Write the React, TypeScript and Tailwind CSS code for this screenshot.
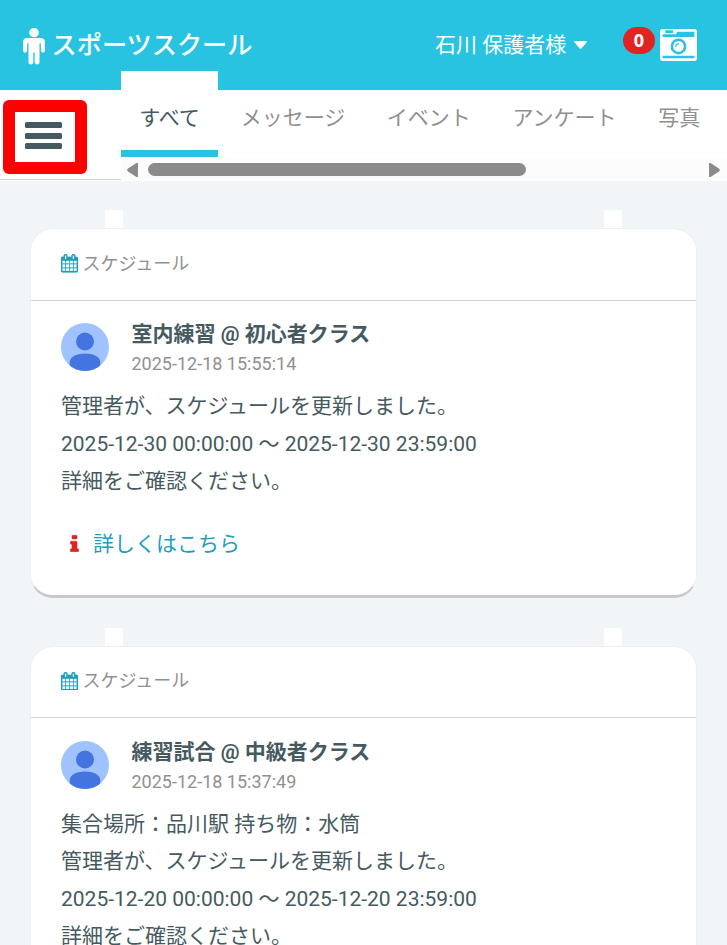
import React from "react";

interface Post {
  id: number;
  title: string;
  postedAt: string;
  lines: string[];
}

const tabs = ["すべて", "メッセージ", "イベント", "アンケート", "写真"];

const posts: Post[] = [
  {
    id: 1,
    title: "室内練習 @ 初心者クラス",
    postedAt: "2025-12-18 15:55:14",
    lines: [
      "管理者が、スケジュールを更新しました。",
      "2025-12-30 00:00:00 〜 2025-12-30 23:59:00",
      "詳細をご確認ください。",
    ],
  },
  {
    id: 2,
    title: "練習試合 @ 中級者クラス",
    postedAt: "2025-12-18 15:37:49",
    lines: [
      "集合場所：品川駅 持ち物：水筒",
      "管理者が、スケジュールを更新しました。",
      "2025-12-20 00:00:00 〜 2025-12-20 23:59:00",
      "詳細をご確認ください。",
    ],
  },
];

function MaleIcon({ className }: { className: string }) {
  return (
    <svg viewBox="0 160 1024 1760" preserveAspectRatio="none" className={className} fill="currentColor">
      <path d="M1024 832v416q0 40-28 68t-68 28-68-28-28-68v-352h-64v912q0 46-33 79t-79 33-79-33-33-79v-464h-64v464q0 46-33 79t-79 33-79-33-33-79v-912h-64v352q0 40-28 68t-68 28-68-28-28-68v-416q0-80 56-136t136-56h640q80 0 136 56t56 136zm-288-448q0 93-65.500 158.500t-158.500 65.500-158.500-65.500-65.500-158.500 65.500-158.500 158.500-65.500 158.500 65.500 65.500 158.500z" />
    </svg>
  );
}

function CameraIcon({ className }: { className: string }) {
  return (
    <svg viewBox="0 128 1792 1536" preserveAspectRatio="none" className={className} fill="currentColor">
      <path d="M928 832q0-14-9-23t-23-9q-66 0-113 47t-47 113q0 14 9 23t23 9 23-9 9-23q0-40 28-68t68-28q14 0 23-9t9-23zm224 130q0 106-75 181t-181 75-181-75-75-181 75-181 181-75 181 75 75 181zm-1024 574h1536v-128h-1536v128zm1152-574q0-159-112.500-271.500t-271.500-112.500-271.500 112.500-112.500 271.500 112.500 271.500 271.500 112.500 271.500-112.500 112.500-271.500zm-1024-642h384v-128h-384v128zm-128 192h1536v-256h-828l-64 128h-644v128zm1664-256v1280q0 53-37.500 90.500t-90.500 37.500h-1536q-53 0-90.500-37.500t-37.500-90.500v-1280q0-53 37.500-90.500t90.500-37.500h1536q53 0 90.500 37.500t37.500 90.500z" />
    </svg>
  );
}

function CalendarIcon({ className }: { className: string }) {
  return (
    <svg viewBox="64 0 1664 1792" className={className} fill="currentColor" stroke="currentColor" strokeWidth="20">
      <path d="M192 1664h288v-288h-288v288zm352 0h320v-288h-320v288zm-352-352h288v-320h-288v320zm352 0h320v-320h-320v320zm-352-384h288v-288h-288v288zm736 736h320v-288h-320v288zm-384-736h320v-288h-320v288zm768 736h288v-288h-288v288zm-384-352h320v-320h-320v320zm-352-864v-288q0-13-9.500-22.500t-22.500-9.500h-64q-13 0-22.500 9.500t-9.500 22.500v288q0 13 9.500 22.500t22.500 9.500h64q13 0 22.500-9.500t9.500-22.500zm736 864h288v-320h-288v320zm-384-384h320v-288h-320v288zm384 0h288v-288h-288v288zm32-480v-288q0-13-9.500-22.500t-22.500-9.500h-64q-13 0-22.500 9.500t-9.500 22.500v288q0 13 9.500 22.500t22.500 9.500h64q13 0 22.500-9.500t9.500-22.500zm384-64v1280q0 52-38 90t-90 38h-1408q-52 0-90-38t-38-90v-1280q0-52 38-90t90-38h128v-96q0-66 47-113t113-47h64q66 0 113 47t47 113v96h384v-96q0-66 47-113t113-47h64q66 0 113 47t47 113v96h128q52 0 90 38t38 90z" />
    </svg>
  );
}

function InfoIcon({ className }: { className: string }) {
  return (
    <svg
      viewBox="556 108 680 1448"
      preserveAspectRatio="none"
      className={className}
      fill="currentColor"
      stroke="currentColor"
      strokeWidth="40"
    >
      <path d="M1216 1344v128q0 26-19 45t-45 19h-512q-26 0-45-19t-19-45v-128q0-26 19-45t45-19h64v-384h-64q-26 0-45-19t-19-45v-128q0-26 19-45t45-19h384q26 0 45 19t19 45v576h64q26 0 45 19t19 45zm-128-1152v192q0 26-19 45t-45 19h-256q-26 0-45-19t-19-45v-192q0-26 19-45t45-19h256q26 0 45 19t19 45z" />
    </svg>
  );
}

function Avatar() {
  return (
    <svg viewBox="0 0 48 48" className="h-12 w-12 shrink-0 rounded-full bg-[#a0c3ff]" fill="#4374e0">
      <circle cx="24" cy="18.500" r="9" />
      <path d="M8.700 48V39.500C8.700 33.500 16 30.500 24 30.500S39.300 33.500 39.300 39.500V48Z" />
    </svg>
  );
}

function Header() {
  return (
    <header className="flex h-[90px] items-start bg-[#29c3e2] text-white">
      <MaleIcon className="mt-7 ml-[23px] h-[36.500px] w-[22px]" />
      <h1 className="mt-7 ml-[6.500px] w-[383.500px] text-[25.200px] leading-[36px] font-medium">スポーツスクール</h1>
      <button className="mt-[30px] flex items-center text-[21px] leading-[30px] whitespace-nowrap">
        石川 保護者様
        <svg viewBox="0 0 13 8" className="ml-2 h-2 w-[13px]" fill="currentColor">
          <path d="M1 0H12Q13.500 .4 12.500 1.600L7.500 7.200Q6.500 8.200 5.500 7.200L.5 1.600Q-.5 .4 1 0Z" />
        </svg>
      </button>
      <span className="mt-[27px] ml-auto flex h-[27px] w-8 items-center justify-center rounded-full bg-[#e02424] font-['Open_Sans',sans-serif] text-[18px] font-bold">
        0
      </span>
      <CameraIcon className="mt-[29px] mr-[30px] ml-[5px] h-8 w-[37px]" />
    </header>
  );
}

function TabBar() {
  return (
    <nav className="flex h-[91px] bg-white">
      <div className="h-[90px] w-[121px] shrink-0 border-b border-[#d5d5d8] pt-[10px] pl-[3px]">
        <button className="flex h-[74px] w-[84px] rounded-[6px] bg-[#f00] p-3">
          <span className="flex h-full w-full flex-col gap-[4.500px] bg-white pt-[10px] pl-[10px]">
            <span className="h-[6px] w-[37px] rounded-[1.500px] bg-[#455a60]" />
            <span className="h-[6px] w-[37px] rounded-[1.500px] bg-[#455a60]" />
            <span className="h-[6px] w-[37px] rounded-[1.500px] bg-[#455a60]" />
          </span>
        </button>
      </div>
      <div className="min-w-0 flex-1">
        <div className="-mt-[19px] flex h-[87px] gap-[1px] text-[21px] leading-[30px] whitespace-nowrap text-[#909090]">
          {tabs.map((tab, i) => (
            <button
              key={tab}
              className={
                i === 0
                  ? "flex h-[86px] w-[97px] shrink-0 justify-center border-b-[7px] border-[#29c3e2] bg-white pt-8 text-[#455a60]"
                  : "flex shrink-0 pt-8 pr-[18.900px] pl-[21.700px]"
              }
            >
              {tab}
            </button>
          ))}
        </div>
        <div className="flex h-[23px] items-center bg-[#fcfcfc]">
          <svg viewBox="0 0 11 14" className="ml-[6px] h-[14px] w-[11px]" fill="#8b8b8b">
            <path d="M11 0V14H9.500L1 8.500Q-.6 7 1 5.500L9.500 0Z" />
          </svg>
          <div className="ml-[10px] h-[13px] w-[378px] rounded-full bg-[#8b8b8b]" />
          <svg viewBox="0 0 11 14" className="mr-[7px] ml-auto h-[14px] w-[11px]" fill="#8b8b8b">
            <path d="M0 0V14H1.500L10 8.500Q11.600 7 10 5.500L1.500 0Z" />
          </svg>
        </div>
      </div>
    </nav>
  );
}

function PostCard({ post }: { post: Post }) {
  return (
    <div>
      <div className="flex justify-between px-[75px]">
        <div className="h-[18px] w-[18px] rounded-t-[2px] bg-white" />
        <div className="h-[18px] w-[18px] rounded-t-[2px] bg-white" />
      </div>
      <article className="rounded-[23px] border border-b-[3px] border-[#eeeef3] border-b-[#c8c8cc] bg-white">
        <div className="flex h-[71.250px] items-start border-b border-[#d5d5d8] pl-[30px] text-[18px] leading-[26px] text-[#909090]">
          <CalendarIcon className="mt-[25px] mr-[4.500px] h-[18.500px] w-[17px] text-[#209fbd]" />
          <span className="mt-[21.500px]">スケジュール</span>
        </div>
        <div className="px-[30px] pt-[17.500px] text-[#455a60]">
          <div className="flex h-[70.250px] gap-[22.500px]">
            <div className="pt-[5px]">
              <Avatar />
            </div>
            <div>
              <h2 className="text-[21px] leading-[32px] font-bold">{post.title}</h2>
              <p className="text-[18px] leading-[28px] text-[#909090]">{post.postedAt}</p>
            </div>
          </div>
          <div className="text-[21px] leading-[37.500px]">
            {post.lines.map((line) => (
              <p key={line}>{line}</p>
            ))}
          </div>
          <a href="#" className="mt-[25px] mb-[31px] flex h-[38px] items-center pl-[9px] text-[21px] text-[#209fbd]">
            <InfoIcon className="mr-[14px] mb-[2px] h-[17px] w-[9px] text-[#e02424]" />
            詳しくはこちら
          </a>
        </div>
      </article>
    </div>
  );
}

export default function App() {
  return (
    <div
      lang="ja"
      className="h-[945px] w-[727px] overflow-hidden bg-[#f1f5f8] font-['Roboto','Noto_Sans_CJK_JP',sans-serif]"
    >
      <Header />
      <TabBar />
      <main className="flex flex-col gap-[30px] px-[30px] pt-[29.400px]">
        {posts.map((post) => (
          <PostCard key={post.id} post={post} />
        ))}
      </main>
    </div>
  );
}
